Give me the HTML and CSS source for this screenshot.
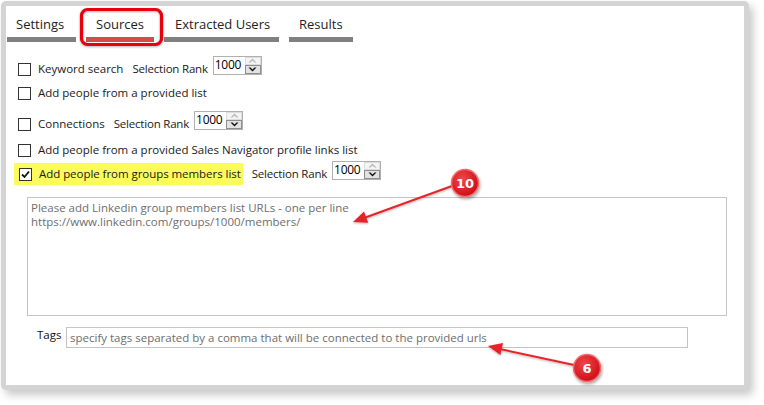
FILE: index.html
```html
<!DOCTYPE html>
<html>
<head>
<meta charset="utf-8">
<link rel="stylesheet" href="styles.css">
</head>
<body>
<div class="frame">
  <div class="tabs">
    <div class="tab tab-settings">Settings</div>
    <div class="tab tab-sources active">Sources</div>
    <div class="tab tab-extracted">Extracted Users</div>
    <div class="tab tab-results">Results</div>
  </div>
  <div class="panel">
    <div class="row">
      <span class="cb"></span><span class="lbl">Keyword search</span>
      <span class="rank">Selection Rank</span>
      <div class="spin"><span class="spin-val">1000</span><div class="spin-btns"><span class="sb up"><svg width="9" height="5" viewBox="0 0 9 5"><polygon points="0.5,4.5 4.5,0.5 8.5,4.5 6.5,4.5 4.5,2.5 2.5,4.5" fill="#b9b9b9"/></svg></span><span class="sb down"><svg width="9" height="5" viewBox="0 0 9 5"><polygon points="0.5,0.5 2.5,0.5 4.5,2.5 6.5,0.5 8.5,0.5 4.5,4.5" fill="#111"/></svg></span></div></div>
    </div>
    <div class="row">
      <span class="cb"></span><span class="lbl">Add people from a provided list</span>
    </div>
    <div class="row row-gap7">
      <span class="cb"></span><span class="lbl">Connections</span>
      <span class="rank">Selection Rank</span>
      <div class="spin"><span class="spin-val">1000</span><div class="spin-btns"><span class="sb up"><svg width="9" height="5" viewBox="0 0 9 5"><polygon points="0.5,4.5 4.5,0.5 8.5,4.5 6.5,4.5 4.5,2.5 2.5,4.5" fill="#b9b9b9"/></svg></span><span class="sb down"><svg width="9" height="5" viewBox="0 0 9 5"><polygon points="0.5,0.5 2.5,0.5 4.5,2.5 6.5,0.5 8.5,0.5 4.5,4.5" fill="#111"/></svg></span></div></div>
    </div>
    <div class="row row-gap2">
      <span class="cb"></span><span class="lbl">Add people from a provided Sales Navigator profile links list</span>
    </div>
    <div class="row">
      <span class="hl"><span class="cb checked"><svg width="11" height="11" viewBox="0 0 11 11"><path d="M2 5.5 L4.5 8 L9 2.5" fill="none" stroke="#111" stroke-width="1.8"/></svg></span><span class="lbl">Add people from groups members list</span></span>
      <span class="rank">Selection Rank</span>
      <div class="spin"><span class="spin-val">1000</span><div class="spin-btns"><span class="sb up"><svg width="9" height="5" viewBox="0 0 9 5"><polygon points="0.5,4.5 4.5,0.5 8.5,4.5 6.5,4.5 4.5,2.5 2.5,4.5" fill="#b9b9b9"/></svg></span><span class="sb down"><svg width="9" height="5" viewBox="0 0 9 5"><polygon points="0.5,0.5 2.5,0.5 4.5,2.5 6.5,0.5 8.5,0.5 4.5,4.5" fill="#111"/></svg></span></div></div>
    </div>
    <div class="urls">Please add Linkedin group members list URLs - one per line<br>https://www.linkedin.com/groups/1000/members/</div>
    <div class="tags-row">
      <span class="tags-lbl">Tags</span>
      <div class="tags-input">specify tags separated by a comma that will be connected to the provided urls</div>
    </div>
  </div>
</div>
<svg class="annot" width="764" height="405" viewBox="0 0 764 405">
  <defs>
    <radialGradient id="bg" cx="40%" cy="35%" r="70%">
      <stop offset="0" stop-color="#f2454a"/>
      <stop offset="1" stop-color="#c80c14"/>
    </radialGradient>
    <filter id="sh" x="-50%" y="-50%" width="200%" height="200%">
      <feDropShadow dx="1" dy="2" stdDeviation="1.6" flood-color="#000" flood-opacity="0.35"/>
    </filter>
    <filter id="sh2" x="-20%" y="-20%" width="140%" height="140%">
      <feDropShadow dx="0" dy="1" stdDeviation="1.2" flood-color="#000" flood-opacity="0.3"/>
    </filter>
  </defs>
  <rect x="81.5" y="9.5" width="80" height="35" rx="6" fill="none" stroke="#e8000c" stroke-width="3.2" filter="url(#sh2)"/>
  <g filter="url(#sh2)">
    <line x1="452" y1="186" x2="364" y2="218" stroke="#e8232a" stroke-width="2"/>
    <polygon points="353,222 368.2,222.8 364,211.6" fill="#e8232a"/>
    <line x1="574" y1="365" x2="500" y2="349" stroke="#e8232a" stroke-width="2"/>
    <polygon points="488,346 503,343.1 500.4,354.9" fill="#e8232a"/>
  </g>
  <g filter="url(#sh)">
    <circle cx="465" cy="183" r="13.5" fill="url(#bg)" stroke="#f56a6e" stroke-width="1.5"/>
    <circle cx="587" cy="368" r="13.5" fill="url(#bg)" stroke="#f56a6e" stroke-width="1.5"/>
  </g>
  <text x="465" y="188" class="badge-txt">10</text>
  <text x="587" y="373" class="badge-txt">6</text>
</svg>
</body>
</html>
```

FILE: styles.css
```css
html, body {
  margin: 0;
  padding: 0;
  background: #ffffff;
}
body {
  position: relative;
  width: 764px;
  height: 405px;
  overflow: hidden;
  font-family: "Open Sans", "Noto Sans", sans-serif;
  font-size: 11.5px;
  color: #1a1a1a;
}
.frame {
  box-sizing: border-box;
  margin: 1px 0 0 1px;
  width: 748px;
  height: 389px;
  border: 5px solid #d4d4d4;
  border-radius: 5px;
  background: #fff;
  box-shadow: 4px 5px 9px rgba(0, 0, 0, 0.22);
}
.tabs {
  display: flex;
  gap: 10px;
  margin: 6px 0 0 1px;
}
.tab {
  box-sizing: border-box;
  height: 30px;
  line-height: 25px;
  font-size: 13px;
  color: #222;
  border-bottom: 5px solid #808080;
  padding-left: 9px;
}
.tab-settings { width: 69px; }
.tab-sources { width: 68px; padding-left: 10px; }
.tab-extracted { width: 115px; padding-left: 11px; }
.tab-results { width: 64px; padding-left: 10px; }
.tab.active { border-bottom-color: #d24b4d; }

.panel {
  padding: 15px 0 0 12px;
}
.row {
  display: flex;
  align-items: center;
  height: 24px;
  line-height: 16px;
}
.row-gap7 { margin-top: 7px; }
.row-gap2 { margin-top: 2px; }
.cb {
  box-sizing: border-box;
  width: 13px;
  height: 13px;
  border: 1px solid #333;
  background: #fff;
  margin-right: 7px;
  margin-top: 1px;
  display: flex;
  align-items: center;
  justify-content: center;
  flex: none;
}
.lbl { white-space: nowrap; }
.rank {
  margin-left: 9px;
  margin-right: 5px;
  white-space: nowrap;
  letter-spacing: -0.2px;
}
.hl {
  display: flex;
  align-items: center;
  background: #fbfb5c;
  height: 22px;
  margin-left: -4px;
  padding: 0 2px 0 5px;
}
.hl .lbl { letter-spacing: -0.05px; }
.spin {
  box-sizing: border-box;
  display: flex;
  width: 49px;
  height: 19px;
  border: 1px solid #b0b0b0;
  background: #fff;
  margin-bottom: 8px;
}
.spin-val {
  flex: 1;
  font-size: 12px;
  line-height: 15px;
  padding-left: 1px;
  color: #000;
  letter-spacing: -0.3px;
}
.spin-btns {
  width: 16px;
  display: flex;
  flex-direction: column;
}
.sb {
  flex: 1;
  display: flex;
  align-items: center;
  justify-content: center;
  box-sizing: border-box;
}
.sb.up {
  background: #f4f4f4;
  border: 1px solid #dcdcdc;
}
.sb.down {
  background: #e2e2e2;
  border: 1px solid #8e8e8e;
}
.urls {
  box-sizing: border-box;
  width: 700px;
  height: 119px;
  margin: 11px 0 0 9px;
  border: 1px solid #c4c4c4;
  padding: 3px 0 0 3px;
  line-height: 14px;
  color: #6e6e6e;
  white-space: nowrap;
}
.tags-row {
  display: flex;
  align-items: center;
  margin: 11px 0 0 19px;
}
.tags-lbl {
  width: 29px;
  margin-top: -6px;
  color: #111;
}
.tags-input {
  box-sizing: border-box;
  width: 622px;
  height: 21px;
  border: 1px solid #c4c4c4;
  padding: 0 0 0 3px;
  line-height: 19px;
  color: #6e6e6e;
  white-space: nowrap;
}
.annot {
  position: absolute;
  left: 0;
  top: 0;
}
.badge-txt {
  font-family: "DejaVu Sans", sans-serif;
  font-weight: bold;
  font-size: 13px;
  fill: #fff;
  text-anchor: middle;
}
```
